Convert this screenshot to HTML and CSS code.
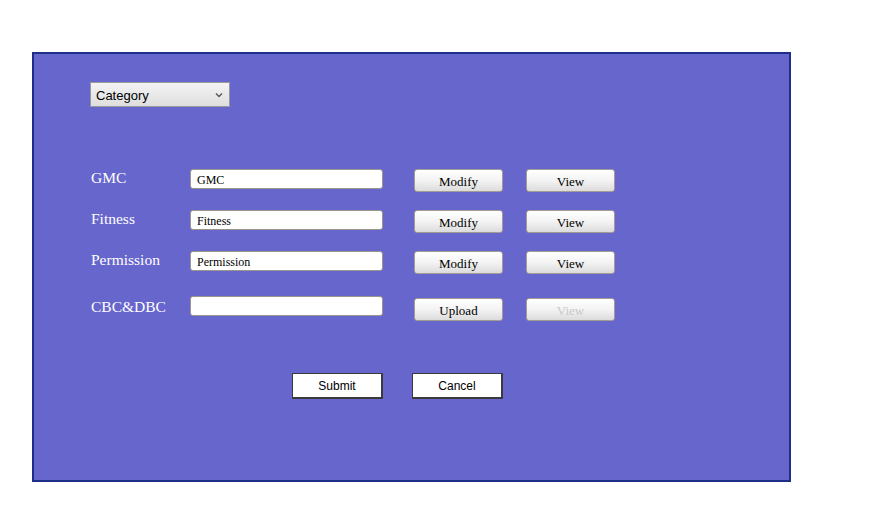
FILE: index.html
```html
<!DOCTYPE html>
<html>
<head>
<meta charset="utf-8">
<link rel="stylesheet" href="styles.css">
</head>
<body>
<div class="page">
  <div class="panel">
    <div class="select">
      <span class="select-text">Category</span>
      <svg class="chev" width="8" height="6" viewBox="0 0 8 6"><path d="M1 1.5 L4 4.5 L7 1.5" fill="none" stroke="#555" stroke-width="1.4"/></svg>
    </div>
    <div class="rows">
      <div class="row">
        <div class="label">GMC</div>
        <div class="input">GMC</div>
        <div class="btn">Modify</div>
        <div class="btn">View</div>
      </div>
      <div class="row">
        <div class="label">Fitness</div>
        <div class="input">Fitness</div>
        <div class="btn">Modify</div>
        <div class="btn">View</div>
      </div>
      <div class="row">
        <div class="label">Permission</div>
        <div class="input">Permission</div>
        <div class="btn">Modify</div>
        <div class="btn">View</div>
      </div>
      <div class="row row-last">
        <div class="label">CBC&amp;DBC</div>
        <div class="input"></div>
        <div class="btn">Upload</div>
        <div class="btn disabled">View</div>
      </div>
    </div>
    <div class="actions">
      <div class="action">Submit</div>
      <div class="action">Cancel</div>
    </div>
  </div>
</div>
</body>
</html>
```
FILE: styles.css
```css
html, body {
  margin: 0;
  padding: 0;
  background: #ffffff;
}
.page {
  padding: 52px 0 0 32px;
}
.panel {
  box-sizing: border-box;
  width: 759px;
  height: 430px;
  background: #6766cc;
  border: 2px solid #1f2e86;
  padding: 28px 0 0 56px;
}
.select {
  box-sizing: border-box;
  width: 140px;
  height: 25px;
  border: 1px solid #9a9a9a;
  background: linear-gradient(#f4f4f4, #dedede);
  display: flex;
  align-items: center;
  justify-content: space-between;
  padding: 0 6px 0 5px;
  font-family: "Liberation Sans", Arial, sans-serif;
  font-size: 13px;
  color: #000;
}
.select-text {
  padding-top: 2px;
}
.chev {
  display: block;
  margin-top: 1px;
}
.rows {
  margin-top: 62px;
  padding-left: 1px;
}
.row {
  display: flex;
  align-items: flex-start;
  height: 41px;
}
.row-last {
  margin-top: 4px;
}
.label {
  width: 99px;
  margin-top: 1px;
  font-family: "Liberation Serif", "Times New Roman", serif;
  font-size: 15.5px;
  line-height: 15px;
  color: #ffffff;
}
.row-last .label {
  margin-top: 3px;
}
.input {
  box-sizing: border-box;
  width: 193px;
  height: 20px;
  margin-right: 31px;
  background: #ffffff;
  border: 1px solid #9c958c;
  border-radius: 3px;
  padding-left: 6px;
  font-family: "Liberation Serif", "Times New Roman", serif;
  font-size: 12px;
  line-height: 20px;
  color: #000;
}
.btn {
  box-sizing: border-box;
  width: 89px;
  height: 23px;
  margin-right: 23px;
  background: linear-gradient(#ffffff 0%, #f3f3f3 50%, #dcdcdc 100%);
  border: 1px solid #a39c92;
  border-radius: 3px;
  text-align: center;
  font-family: "Liberation Serif", "Times New Roman", serif;
  font-size: 13px;
  line-height: 23px;
  color: #000;
}
.row-last .btn {
  margin-top: 2px;
}
.btn.disabled {
  color: #c9c9c9;
}
.actions {
  display: flex;
  margin-top: 36px;
  padding-left: 202px;
  gap: 29px;
}
.action {
  box-sizing: border-box;
  width: 91px;
  height: 26px;
  background: #ffffff;
  border: 1px solid #3a3a3a;
  border-bottom-width: 2px;
  border-right-width: 2px;
  padding-top: 1px;
  text-align: center;
  font-family: "Liberation Sans", Arial, sans-serif;
  font-size: 12px;
  line-height: 23px;
  color: #000;
}
```
